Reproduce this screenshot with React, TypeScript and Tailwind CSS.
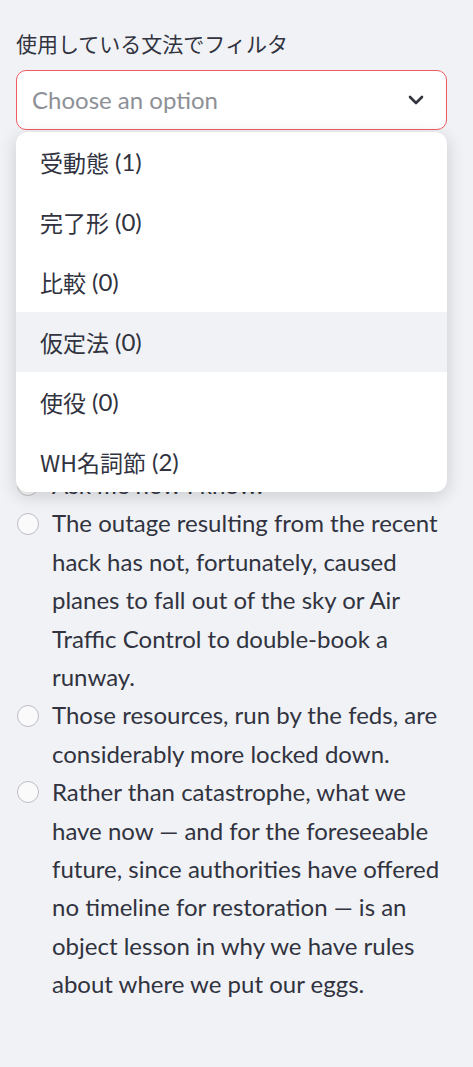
import React from 'react';

const options = [
  { label: '受動態', count: 1 },
  { label: '完了形', count: 0 },
  { label: '比較', count: 0 },
  { label: '仮定法', count: 0 },
  { label: '使役', count: 0 },
  { label: 'WH名詞節', count: 2 },
];

const sentences = [
  'Ask me how I know.',
  'The outage resulting from the recent hack has not, fortunately, caused planes to fall out of the sky or Air Traffic Control to double-book a runway.',
  'Those resources, run by the feds, are considerably more locked down.',
  'Rather than catastrophe, what we have now — and for the foreseeable future, since authorities have offered no timeline for restoration — is an object lesson in why we have rules about where we put our eggs.',
];

const font = { fontFamily: 'Lato, "Noto Sans CJK JP", sans-serif' };

const Chevron = () => (
  <svg width="16" height="10" viewBox="0 0 16 10" fill="none">
    <path d="M2 2l6 6 6-6" stroke="#31333f" strokeWidth="2.6" strokeLinecap="round" strokeLinejoin="round" />
  </svg>
);

const RadioRow: React.FC<{ text: string }> = ({ text }) => (
  <div className="flex items-start">
    <div className="w-9 h-[38.4px] flex items-center shrink-0">
      <span className="ml-px w-[22px] h-[22px] rounded-full border-[1.5px] border-[#bdbec3] bg-[#fafafa]" />
    </div>
    <div className="text-[24px] leading-[38.4px] text-[#31333f]">{text}</div>
  </div>
);

export default function App() {
  return (
    <div className="min-h-screen bg-[#f0f2f6] pl-4 pr-[26px] pt-[30px]" style={font}>
      <div className="text-[21px] leading-[28px] text-[#31333f] mb-3">使用している文法でフィルタ</div>

      <div className="relative">
        <div className="h-[60px] bg-white border border-[#ef5b62] rounded-[10px] flex items-center justify-between pl-[15px] pr-[22px]">
          <span className="text-[24px] text-[#8e9097]">Choose an option</span>
          <Chevron />
        </div>

        {/* open dropdown menu, lies over the radio list */}
        <div className="absolute left-0 right-0 top-[62px] z-10 bg-white rounded-[12px] shadow-[0_4px_18px_rgba(0,0,0,0.16)] overflow-hidden">
          {options.map((o, i) => (
            <div
              key={o.label}
              className={`h-[60px] flex items-center pl-6 text-[24px] text-[#31333f] ${i === 3 ? 'bg-[#f0f2f6]' : ''}`}
            >
              <span style={{ fontFamily: '"Noto Sans CJK JP", sans-serif' }} className="text-[23px]">{o.label}</span>
              <span className="ml-[6px]">({o.count})</span>
            </div>
          ))}
        </div>
      </div>

      <div className="mt-[336px]">
        {sentences.map((s) => (
          <RadioRow key={s} text={s} />
        ))}
      </div>
    </div>
  );
}
